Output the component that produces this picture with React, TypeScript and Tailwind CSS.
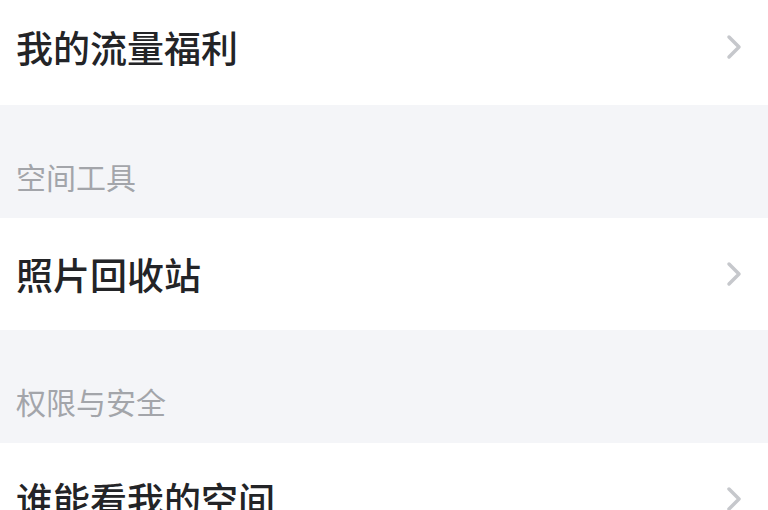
const FONT = '"Noto Sans CJK SC", "Noto Sans", sans-serif';

function Chevron() {
  return (
    <svg width="16" height="26" viewBox="0 0 16 26" fill="none" className="shrink-0">
      <path d="M3 3 L13 13 L3 23" stroke="#c6c8cc" strokeWidth="3.5" strokeLinecap="round" strokeLinejoin="round" />
    </svg>
  );
}

function Row({ label, className }: { label: string; className: string }) {
  return (
    <div className={`flex items-center justify-between bg-white pl-4 pr-[26px] ${className}`}>
      <span className="text-[37px] font-medium leading-none text-[#232427]">{label}</span>
      <Chevron />
    </div>
  );
}

function SectionHeader({ label }: { label: string }) {
  return (
    <div className="flex h-[113px] items-end bg-[#f4f5f8] pb-[27px] pl-4">
      <span className="text-[30px] leading-none text-[#a3a5aa]">{label}</span>
    </div>
  );
}

export default function App() {
  return (
    <div className="h-[510px] w-[768px] overflow-hidden bg-white" style={{ fontFamily: FONT }}>
      <Row label="我的流量福利" className="h-[105px] pb-[11px]" />
      <SectionHeader label="空间工具" />
      <Row label="照片回收站" className="h-[112px]" />
      <SectionHeader label="权限与安全" />
      <Row label="谁能看我的空间" className="h-[112px]" />
    </div>
  );
}
